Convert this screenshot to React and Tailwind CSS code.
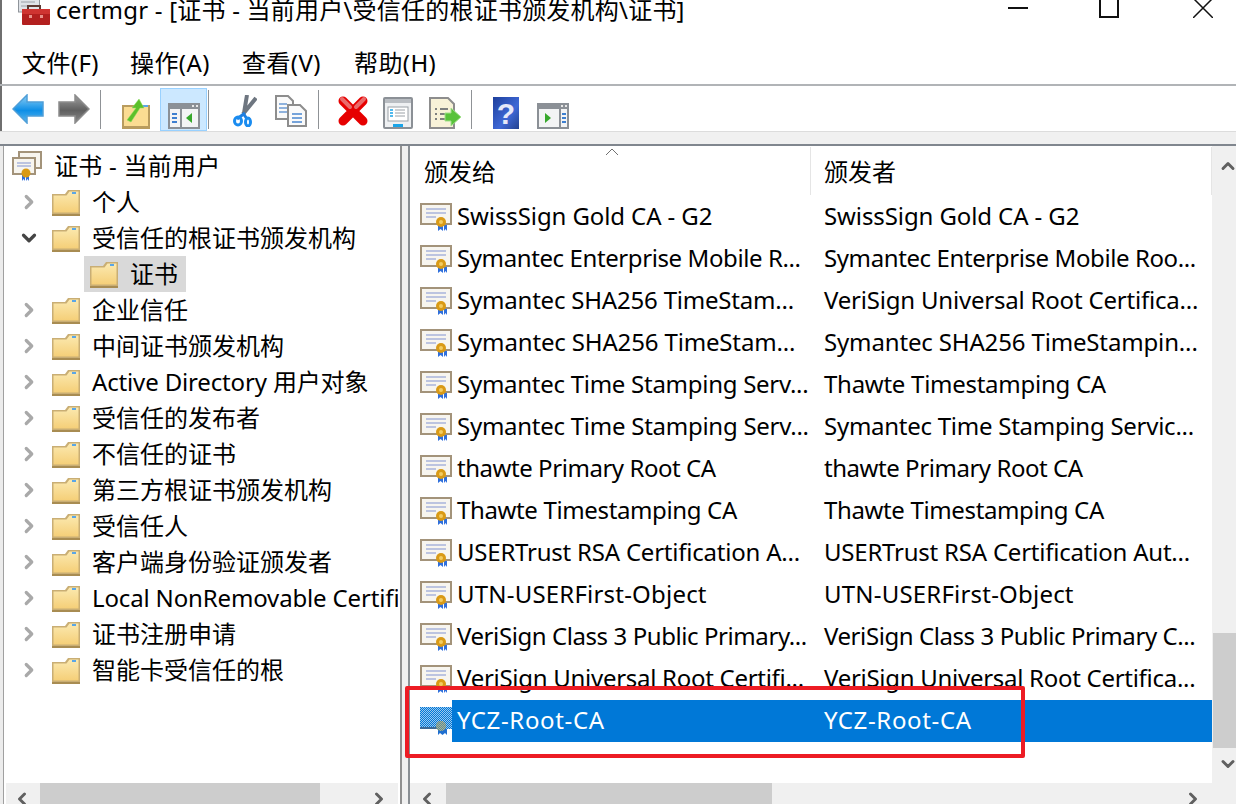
import { ChevronRight, ChevronDown, ChevronUp, ChevronLeft } from 'lucide-react';

const treeItems = [
  { label: '个人' },
  { label: '受信任的根证书颁发机构', open: true },
  { label: '证书', child: true },
  { label: '企业信任' },
  { label: '中间证书颁发机构' },
  { label: 'Active Directory 用户对象', tight: true },
  { label: '受信任的发布者' },
  { label: '不信任的证书' },
  { label: '第三方根证书颁发机构' },
  { label: '受信任人' },
  { label: '客户端身份验证颁发者' },
  { label: 'Local NonRemovable Certificates', tight: true },
  { label: '证书注册申请' },
  { label: '智能卡受信任的根' },
];

const certRows = [
  ['SwissSign Gold CA - G2', 'SwissSign Gold CA - G2', 'tracking-[-0.1px]'],
  ['Symantec Enterprise Mobile R...', 'Symantec Enterprise Mobile Roo...', 'tracking-[-0.4px]'],
  ['Symantec SHA256 TimeStam...', 'VeriSign Universal Root Certifica...', 'tracking-[-0.2px]'],
  ['Symantec SHA256 TimeStam...', 'Symantec SHA256 TimeStampin...', 'tracking-[-0.15px]'],
  ['Symantec Time Stamping Serv...', 'Thawte Timestamping CA', 'tracking-[-0.27px]'],
  ['Symantec Time Stamping Serv...', 'Symantec Time Stamping Servic...', 'tracking-[-0.26px]'],
  ['thawte Primary Root CA', 'thawte Primary Root CA', 'tracking-[-0.45px]'],
  ['Thawte Timestamping CA', 'Thawte Timestamping CA', 'tracking-[-0.36px]'],
  ['USERTrust RSA Certification A...', 'USERTrust RSA Certification Aut...', 'tracking-[-0.22px]'],
  ['UTN-USERFirst-Object', 'UTN-USERFirst-Object', 'tracking-[0.2px]'],
  ['VeriSign Class 3 Public Primary...', 'VeriSign Class 3 Public Primary C...', 'tracking-[-0.42px]'],
  ['VeriSign Universal Root Certifi...', 'VeriSign Universal Root Certifica...', 'tracking-[-0.28px]'],
];

function AppIcon() {
  return (
    <svg width="32" height="25" viewBox="0 0 32 25" className="shrink-0">
      <rect x="0.5" y="-4" width="21" height="16" fill="#dfe3e8" stroke="#8f949a" />
      <path d="M3 2h14M3 6h14" stroke="#9aa0a8" />
      <path d="M10 10V6h12v4" fill="none" stroke="#5c3a34" strokeWidth="2" />
      <rect x="4" y="9" width="28" height="16" rx="1" fill="#b3201f" />
      <rect x="4" y="9" width="28" height="5" fill="#cf3431" />
      <rect x="11" y="15" width="3" height="3" fill="#e8938c" />
      <rect x="22" y="15" width="3" height="3" fill="#e8938c" />
    </svg>
  );
}

function Folder() {
  return (
    <svg width="28" height="27" viewBox="0 0 28 27" className="shrink-0">
      <defs>
        <linearGradient id="folderFill" x1="0" y1="0" x2="0" y2="1">
          <stop offset="0" stopColor="#fbe9b0" />
          <stop offset="1" stopColor="#f5cf78" />
        </linearGradient>
      </defs>
      <path d="M0 5h13l3-4 12 0v26H0z" fill="#c9ae74" />
      <path d="M1.500 6.500h13l3-4 9 0v21H1.500z" fill="url(#folderFill)" />
      <rect x="20" y="3" width="4" height="2" fill="#5aa6e6" />
      <rect x="0" y="25" width="28" height="2" fill="#a88c52" />
    </svg>
  );
}

function CertIcon({ selected }) {
  if (selected) {
    return (
      <svg width="32" height="28" viewBox="0 0 32 28" className="shrink-0">
        <defs>
          <pattern id="dither" width="2" height="2" patternUnits="userSpaceOnUse">
            <rect width="2" height="2" fill="#9cc8ee" />
            <rect width="1" height="1" fill="#0078d7" />
            <rect x="1" y="1" width="1" height="1" fill="#0078d7" />
          </pattern>
        </defs>
        <rect x="0" y="0" width="32" height="22" fill="url(#dither)" />
        <rect x="0" y="20" width="17" height="2" fill="#3c6a96" />
        <path d="M18 22h9v6l-2-2-2.500 2-2.500-2-2 2z" fill="#1f6fd0" />
        <circle cx="21" cy="19" r="5" fill="#b8a04a" />
        <circle cx="21" cy="19" r="5" fill="url(#dither)" opacity="0.5" />
      </svg>
    );
  }
  return (
    <svg width="32" height="28" viewBox="0 0 32 28" className="shrink-0">
      <rect x="0" y="0" width="32" height="22" fill="#a3937a" />
      <rect x="2" y="2" width="28" height="18" fill="#f7f5ef" />
      <path d="M6 6h20M6 10h20M6 14h10" stroke="#a9b4dc" strokeWidth="1.500" />
      <path d="M18 22h5v6l-2.500-2-2.500 2z M24 22h3v6l-1.500-2-1.500 2z" fill="#2f6fdc" />
      <circle cx="21" cy="19" r="5" fill="#d99a16" />
      <circle cx="21" cy="19" r="2" fill="#f3cc62" />
    </svg>
  );
}

function RootCertIcon() {
  return (
    <svg width="30" height="30" viewBox="0 0 30 30" className="shrink-0">
      <rect x="6" y="0" width="24" height="18" fill="#a3937a" />
      <rect x="8" y="2" width="20" height="14" fill="#f7f5ef" />
      <rect x="0" y="6" width="24" height="18" fill="#a3937a" />
      <rect x="2" y="8" width="20" height="14" fill="#f7f5ef" />
      <path d="M5 12h14M5 15h14" stroke="#a9b4dc" strokeWidth="1.500" />
      <path d="M10 24h3v6l-1.500-2-1.500 2zM14 24h3v6l-1.500-2-1.500 2z" fill="#2f6fdc" />
      <circle cx="14" cy="22" r="4.500" fill="#d99a16" />
    </svg>
  );
}

function ArrowLeft() {
  return (
    <svg width="32" height="30" viewBox="0 0 32 30" className="shrink-0">
      <defs>
        <linearGradient id="backFill" x1="0" y1="0" x2="0" y2="1">
          <stop offset="0" stopColor="#8fd0f5" />
          <stop offset="0.55" stopColor="#0d8ee6" />
          <stop offset="1" stopColor="#5cb8ee" />
        </linearGradient>
      </defs>
      <path d="M1 15 15 1v7h16v14H15v7z" fill="url(#backFill)" stroke="#4f9fd8" strokeWidth="1.500" />
    </svg>
  );
}

function ArrowRight() {
  return (
    <svg width="32" height="30" viewBox="0 0 32 30" className="shrink-0">
      <defs>
        <linearGradient id="fwdFill" x1="0" y1="0" x2="0" y2="1">
          <stop offset="0" stopColor="#a0a0a0" />
          <stop offset="0.55" stopColor="#5f5f5f" />
          <stop offset="1" stopColor="#8a8a8a" />
        </linearGradient>
      </defs>
      <path d="M31 15 17 1v7H1v14h16v7z" fill="url(#fwdFill)" stroke="#8c8c8c" strokeWidth="1.500" />
    </svg>
  );
}

function UpFolder() {
  return (
    <svg width="28" height="30" viewBox="0 0 28 30" className="shrink-0">
      <path d="M0 6h28v24H0z" fill="#b99c5e" />
      <path d="M2 8h24v19H2z" fill="#fbdc92" />
      <rect x="21" y="6" width="5" height="2" fill="#5aa6e6" />
      <path d="M5 21 14 9H10L17 0l5 9h-4L9 23z" fill="#5cc02a" stroke="#8fe060" strokeWidth="0.500" />
    </svg>
  );
}

function PaneIcon({ mirrored }) {
  return (
    <svg width="32" height="26" viewBox="0 0 32 26" className="shrink-0">
      <rect width="32" height="26" fill="#8b9096" />
      <rect x="2" y="6" width="28" height="18" fill="#f3f4f5" />
      <rect x="24" y="2" width="2" height="2" fill="#e8e8e8" />
      <rect x="28" y="2" width="2" height="2" fill="#e8e8e8" />
      {mirrored ? (
        <>
          <rect x="22" y="6" width="2" height="18" fill="#8b9096" />
          <path d="M8 10v10l6-5z" fill="#37a82c" />
          <path d="M25 10h4v2h-4zM25 14h4v2h-4zM25 18h4v2h-4z" fill="#3d7fd0" />
        </>
      ) : (
        <>
          <rect x="12" y="6" width="2" height="18" fill="#8b9096" />
          <path d="M24 10v10l-6-5z" fill="#37a82c" />
          <path d="M4 10h5v2H4zM4 14h5v2H4zM4 18h5v2H4z" fill="#3d7fd0" />
        </>
      )}
    </svg>
  );
}

function Scissors() {
  return (
    <svg width="24" height="32" viewBox="0 0 24 32" className="shrink-0">
      <path d="M14 0 11 18M23 3 10 19" stroke="#6e7680" strokeWidth="4" />
      <path d="M10 18 14 24M12 18 4 24" stroke="#1f7fe0" strokeWidth="3" />
      <ellipse cx="5" cy="26" rx="3.500" ry="4" fill="none" stroke="#1a8cf0" strokeWidth="3" />
      <ellipse cx="15" cy="27" rx="2.500" ry="4" fill="none" stroke="#1a8cf0" strokeWidth="3" />
    </svg>
  );
}

function CopyIcon() {
  return (
    <svg width="32" height="32" viewBox="0 0 32 32" className="shrink-0">
      <path d="M1 1h12l5 5v18H1z" fill="#fafafa" stroke="#8d8d8d" strokeWidth="2" />
      <path d="M4 9h8M4 13h8M4 17h8" stroke="#6c9bd4" strokeWidth="1.500" />
      <path d="M13 10h12l6 6v15H13z" fill="#fafafa" stroke="#8d8d8d" strokeWidth="2" />
      <path d="M17 19h10M17 23h10M17 27h10" stroke="#4a86cf" strokeWidth="1.500" />
    </svg>
  );
}

function DeleteIcon() {
  return (
    <svg width="32" height="32" viewBox="0 0 32 32" className="shrink-0">
      <path d="M6 6l20 20M26 6 6 26" stroke="#e60000" strokeWidth="9" strokeLinecap="round" />
      <path d="M5 4l8 8M27 4l-8 8" stroke="#ea6a6a" strokeWidth="4" strokeLinecap="round" />
    </svg>
  );
}

function PropsIcon() {
  return (
    <svg width="30" height="32" viewBox="0 0 30 32" className="shrink-0">
      <rect x="1" y="1" width="28" height="30" rx="1" fill="#eef0f2" stroke="#8b9096" strokeWidth="2" />
      <rect x="2" y="2" width="26" height="4" fill="#b9bdc2" />
      <rect x="5" y="10" width="20" height="14" fill="#ffffff" stroke="#9aa0a6" />
      <path d="M7 13h3M7 16h3M7 19h3" stroke="#19a4e8" strokeWidth="1.500" />
      <path d="M12 13h10M12 16h10M12 19h10" stroke="#9aa0a6" />
      <rect x="10" y="27" width="10" height="3" fill="#19a4e8" />
    </svg>
  );
}

function ExportIcon() {
  return (
    <svg width="32" height="32" viewBox="0 0 32 32" className="shrink-0">
      <path d="M1 1h18l6 6v24H1z" fill="#f8f2d8" stroke="#8d8d8d" strokeWidth="2" />
      <path d="M6 12h2M11 12h8M6 17h2M11 17h8M6 22h2M11 22h8" stroke="#555b62" strokeWidth="1.500" />
      <path d="M16 16h6v-5l10 9-10 9v-5h-6z" fill="#58c23a" stroke="#a2e08c" />
    </svg>
  );
}

function HelpIcon() {
  return (
    <svg width="26" height="32" viewBox="0 0 26 32" className="shrink-0">
      <defs>
        <linearGradient id="helpFill" x1="0" y1="0" x2="1" y2="1">
          <stop offset="0" stopColor="#1d3f9c" />
          <stop offset="0.6" stopColor="#3f68d6" />
          <stop offset="1" stopColor="#23428f" />
        </linearGradient>
      </defs>
      <rect width="26" height="32" fill="url(#helpFill)" />
      <text x="13" y="27" textAnchor="middle" fontSize="30" fontWeight="700" fontFamily="Liberation Sans" fill="#e6e8f8">?</text>
    </svg>
  );
}

function ToolSep() {
  return <div className="mt-[4px] h-[39px] w-[1px] shrink-0 bg-[#8f9296]" />;
}

function TreeRow({ item }) {
  if (item.child) {
    return (
      <div className="flex h-[36px] items-center pl-[80px]">
        <div className="flex h-[36px] w-[102px] items-center bg-[#d9d9d9] pl-[6px]">
          <Folder />
          <span className="ml-[12px]">{item.label}</span>
        </div>
      </div>
    );
  }
  return (
    <div className="flex h-[36px] items-center">
      <div className="flex w-[48px] shrink-0 pl-[14px]">
        {item.open ? (
          <ChevronDown size={22} strokeWidth={3.5} className="text-[#454545]" />
        ) : (
          <ChevronRight size={22} strokeWidth={3.5} className="text-[#a9a9a9]" />
        )}
      </div>
      <Folder />
      <span className={`ml-[12px] whitespace-nowrap ${item.tight ? 'tracking-[-0.15px]' : ''}`}>{item.label}</span>
    </div>
  );
}

function CertRow({ row, selected }) {
  return (
    <div className="flex h-[42px] items-center pl-[10px]">
      <CertIcon selected={selected} />
      <div className={`flex h-[42px] flex-1 items-center whitespace-nowrap ${row[2]} ${selected ? 'bg-[#0078d7] text-white' : ''}`}>
        <div className="-mt-[2px] w-[367px] shrink-0 overflow-hidden pl-[5px] leading-[40px]">{row[0]}</div>
        <div className="-mt-[2px] pl-[5px] leading-[40px]">{row[1]}</div>
      </div>
    </div>
  );
}

export default function App() {
  return (
    <div className="relative flex h-[804px] w-[1236px] flex-col overflow-hidden bg-white font-['Noto_Sans','Noto_Sans_CJK_SC',sans-serif] text-[24px] leading-none text-black">
      {/* Title bar */}
      <div className="flex h-[44px] shrink-0 border-l-2 border-[#6f6f6f] pl-[16px]">
        <AppIcon />
        <div className="ml-[6px] h-[20px] whitespace-nowrap leading-[20px] tracking-[0.22px]">certmgr - [证书 - 当前用户\受信任的根证书颁发机构\证书]</div>
        <div className="ml-auto flex h-[18px] items-start">
          <div className="mr-[71px] mt-[7px] h-[2px] w-[20px] bg-[#111]" />
          <div className="mr-[74px] h-[18px] w-[20px] border-2 border-t-0 border-[#111]" />
          <svg width="20" height="18" viewBox="0 0 20 18" className="mr-[23px]">
            <path d="M0 -2 20 18M20 -2 0 18" stroke="#111" strokeWidth="1.500" />
          </svg>
        </div>
      </div>

      {/* Menu */}
      <div className="flex h-[40px] shrink-0 items-center border-l-2 border-[#6f6f6f] pb-[2px] pl-[20px] tracking-[0.4px]">
        <span className="w-[108px]">文件(F)</span>
        <span className="w-[112px]">操作(A)</span>
        <span className="w-[112px]">查看(V)</span>
        <span>帮助(H)</span>
      </div>
      <div className="h-[2px] shrink-0 bg-[#b1b4b7]" />

      {/* Toolbar */}
      <div className="flex h-[45px] shrink-0 items-center border-l-2 border-[#6f6f6f] pl-[10px]">
        <ArrowLeft />
        <div className="ml-[14px]"><ArrowRight /></div>
        <div className="ml-[10px] self-start"><ToolSep /></div>
        <div className="ml-[21px] mt-[10px]"><UpFolder /></div>
        <div className="ml-[10px] mt-[2px] flex h-[43px] w-[47px] shrink-0 items-center justify-center self-start border border-[#99d1ff] bg-[#cce8ff] pt-[12px]">
          <PaneIcon />
        </div>
        <div className="ml-[1px] self-start"><ToolSep /></div>
        <div className="ml-[24px] mt-[4px]"><Scissors /></div>
        <div className="ml-[18px] mt-[4px]"><CopyIcon /></div>
        <div className="ml-[11px] self-start"><ToolSep /></div>
        <div className="ml-[18px] mt-[4px]"><DeleteIcon /></div>
        <div className="ml-[14px] mt-[8px]"><PropsIcon /></div>
        <div className="ml-[16px] mt-[8px]"><ExportIcon /></div>
        <div className="ml-[10px] self-start"><ToolSep /></div>
        <div className="ml-[21px] mt-[8px]"><HelpIcon /></div>
        <div className="ml-[18px] mt-[14px]"><PaneIcon mirrored /></div>
      </div>
      <div className="h-[13px] shrink-0 border-t border-[#dcdcdc] bg-[#f0f0f0]" />
      <div className="h-[2px] shrink-0 bg-[#80868e]" />

      {/* Panels */}
      <div className="flex min-h-0 flex-1">
        <div className="w-[4px] shrink-0 border-r border-[#a0a0a0] bg-[#ececec]" />

        {/* Tree */}
        <div className="flex w-[398px] shrink-0 flex-col border-r-2 border-[#909090]">
          <div className="mr-[2px] min-h-0 flex-1 overflow-hidden pt-[2px]">
            <div className="flex h-[36px] items-center pl-[8px]">
              <RootCertIcon />
              <span className="ml-[12px] tracking-[0.25px]">证书 - 当前用户</span>
            </div>
            {treeItems.map((item) => (
              <TreeRow key={item.label} item={item} />
            ))}
          </div>
          <div className="relative mx-[2px] flex h-[21px] shrink-0 bg-[#f0f0f0]">
            <ChevronLeft size={20} strokeWidth={3.5} className="absolute left-[6px] top-[6px] text-[#606060]" />
            <div className="ml-[34px] w-[280px] bg-[#cdcdcd]" />
            <ChevronRight size={20} strokeWidth={3.5} className="absolute left-[363px] top-[6px] text-[#606060]" />
          </div>
        </div>

        <div className="w-[8px] shrink-0 border-r-2 border-[#8a8f94] bg-[#f0f0f0]" />

        {/* Cert list */}
        <div className="flex min-w-0 flex-1 justify-between bg-[#f0f0f0]">
          <div className="flex w-[802px] shrink-0 flex-col">
            <div className="min-h-0 flex-1 overflow-hidden bg-white">
              <div className="relative flex h-[50px] items-center">
                <svg width="14" height="8" viewBox="0 0 14 8" className="absolute left-[195px] top-[2px]">
                  <path d="M1 7 7 1l6 6" fill="none" stroke="#707070" strokeWidth="1" />
                </svg>
                <div className="flex h-[48px] w-[401px] items-center border-r border-[#e5e5e5] pl-[14px] pt-[2px]">颁发给</div>
                <div className="flex h-[48px] flex-1 items-center border-r border-[#e5e5e5] pl-[13px] pt-[2px]">颁发者</div>
              </div>
              {certRows.map((row, i) => (
                <CertRow key={i} row={row} />
              ))}
              <CertRow row={['YCZ-Root-CA', 'YCZ-Root-CA', 'tracking-[0.65px]']} selected />
            </div>
            <div className="relative ml-[2px] flex h-[21px] shrink-0 bg-[#f0f0f0]">
              <ChevronLeft size={20} strokeWidth={3.5} className="absolute left-[5px] top-[6px] text-[#606060]" />
              <div className="ml-[34px] w-[326px] bg-[#cdcdcd]" />
              <ChevronRight size={20} strokeWidth={3.5} className="absolute left-[771px] top-[6px] text-[#606060]" />
            </div>
          </div>

          <div className="flex w-[23px] shrink-0 flex-col items-center bg-[#f0f0f0]">
            <ChevronUp size={20} strokeWidth={3.5} className="ml-[7px] mt-[10px] text-[#606060]" />
            <div className="mt-[457px] h-[115px] w-full bg-[#cdcdcd]" />
            <ChevronDown size={20} strokeWidth={3.5} className="ml-[7px] mt-[6px] text-[#606060]" />
          </div>
        </div>
      </div>

      {/* Red annotation box */}
      <div className="absolute left-[405px] top-[686px] h-[72px] w-[620px] rounded-[2px] border-4 border-[#ed1c24]" />
    </div>
  );
}
